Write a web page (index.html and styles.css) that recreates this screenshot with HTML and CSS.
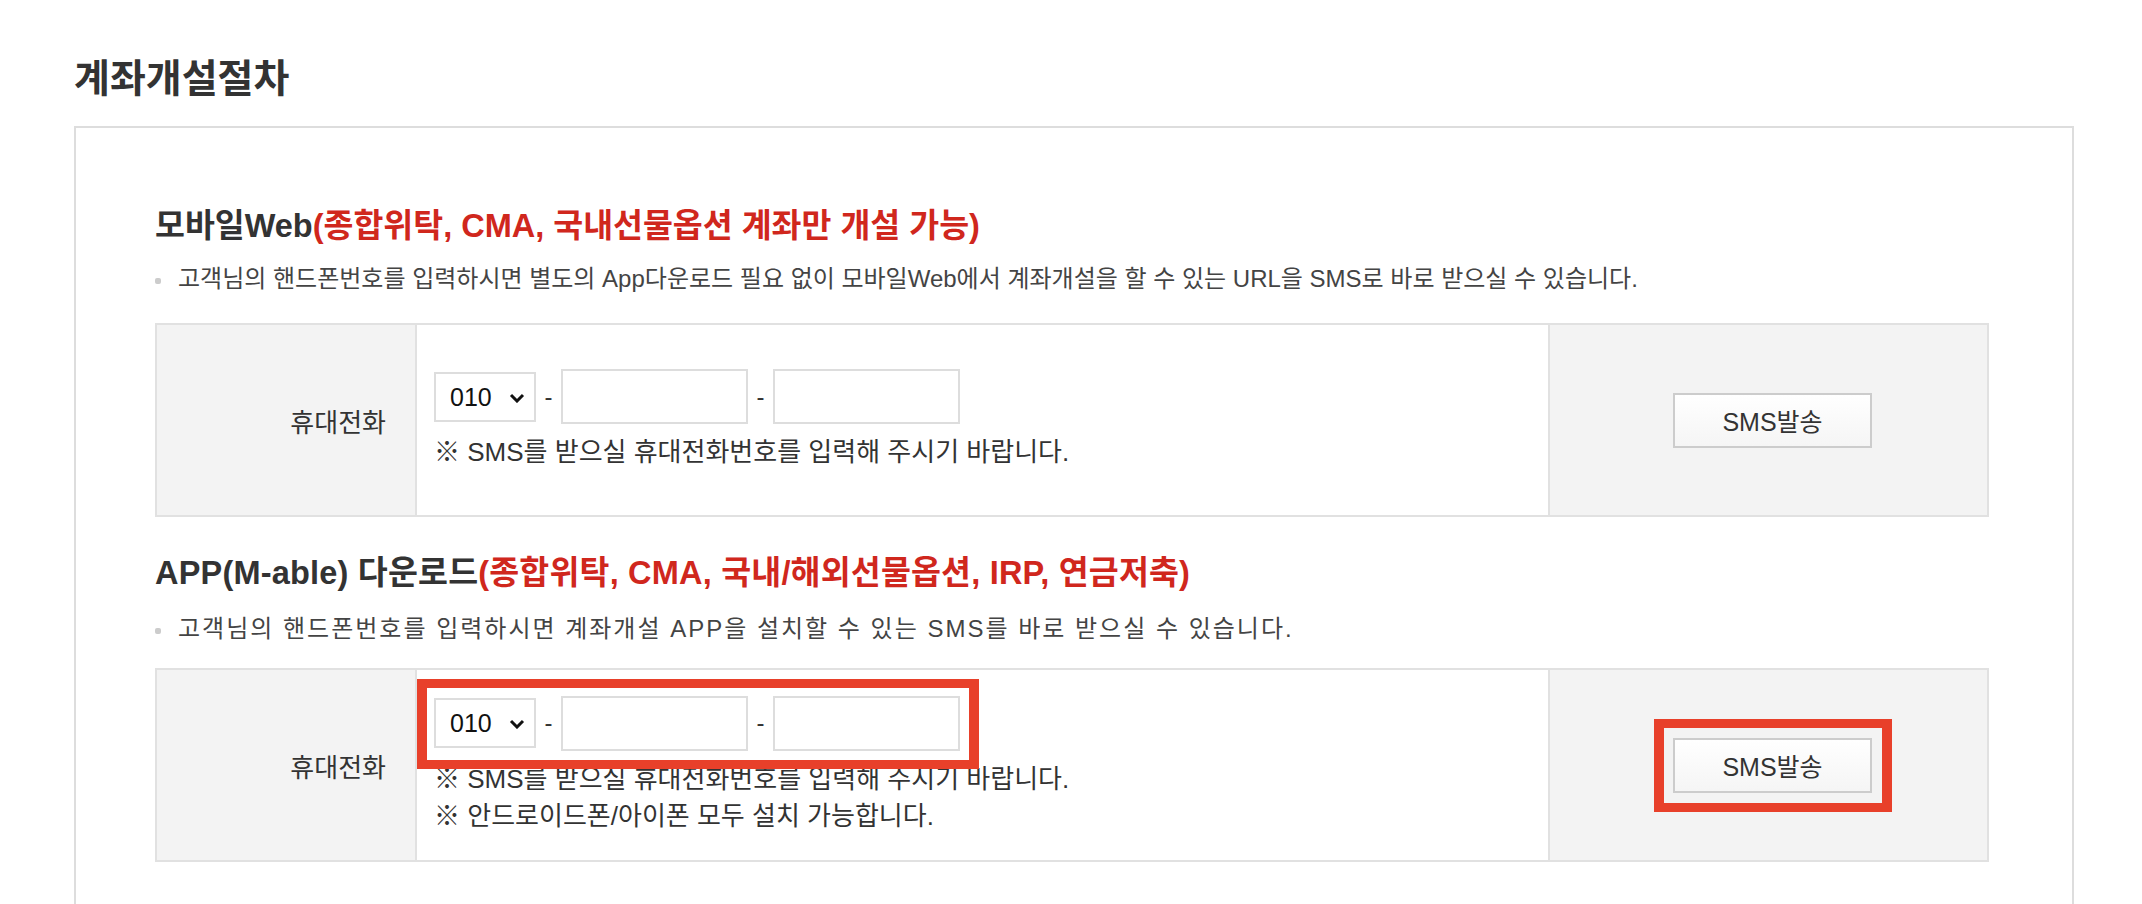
FILE: index.html
```html
<!DOCTYPE html>
<html lang="ko">
<head>
  <meta charset="UTF-8" />
  <meta name="viewport" content="width=device-width, initial-scale=1.0"/>
  <title>계좌개설절차</title>
  <link rel="stylesheet" href="styles.css">
</head>
<body>

  <div class="page">
    <h1 class="page-title">계좌개설절차</h1>

    <div class="box">
      <!-- 모바일Web -->
      <section class="step">
        <h2 class="step-title">모바일Web<em>(종합위탁, CMA, 국내선물옵션 계좌만 개설 가능)</em></h2>
        <p class="step-desc"><span class="dot"></span>고객님의 핸드폰번호를 입력하시면 별도의 App다운로드 필요 없이 모바일Web에서 계좌개설을 할 수 있는 URL을 SMS로 바로 받으실 수 있습니다.</p>
        <table class="phone-table">
          <colgroup><col class="col-label"><col><col class="col-btn"></colgroup>
          <tr>
            <th>휴대전화</th>
            <td class="phone-cell">
              <div class="phone-fields">
                <div class="select-wrap">
                  <select><option>010</option><option>011</option><option>016</option><option>017</option><option>018</option><option>019</option></select>
                  <svg class="chev" width="16" height="10" viewBox="0 0 16 10"><path d="M2 2 L8 8 L14 2" fill="none" stroke="#111" stroke-width="3"/></svg>
                </div>
                <span class="dash">-</span>
                <input type="text" maxlength="4">
                <span class="dash">-</span>
                <input type="text" maxlength="4">
              </div>
              <p class="note">※ SMS를 받으실 휴대전화번호를 입력해 주시기 바랍니다.</p>
            </td>
            <td class="btn-cell"><span class="btn-wrap"><button class="sms-btn">SMS발송</button></span></td>
          </tr>
        </table>
      </section>

      <!-- APP 다운로드 -->
      <section class="step step-app">
        <h2 class="step-title">APP(M-able) 다운로드<em>(종합위탁, CMA, 국내/해외선물옵션, IRP, 연금저축)</em></h2>
        <p class="step-desc"><span class="dot"></span>고객님의 핸드폰번호를 입력하시면 계좌개설 APP을 설치할 수 있는 SMS를 바로 받으실 수 있습니다.</p>
        <table class="phone-table">
          <colgroup><col class="col-label"><col><col class="col-btn"></colgroup>
          <tr>
            <th>휴대전화</th>
            <td class="phone-cell">
              <div class="phone-fields marked">
                <div class="select-wrap">
                  <select><option>010</option><option>011</option><option>016</option><option>017</option><option>018</option><option>019</option></select>
                  <svg class="chev" width="16" height="10" viewBox="0 0 16 10"><path d="M2 2 L8 8 L14 2" fill="none" stroke="#111" stroke-width="3"/></svg>
                </div>
                <span class="dash">-</span>
                <input type="text" maxlength="4">
                <span class="dash">-</span>
                <input type="text" maxlength="4">
              </div>
              <p class="note">※ SMS를 받으실 휴대전화번호를 입력해 주시기 바랍니다.</p>
              <p class="note">※ 안드로이드폰/아이폰 모두 설치 가능합니다.</p>
            </td>
            <td class="btn-cell"><span class="btn-wrap marked"><button class="sms-btn">SMS발송</button></span></td>
          </tr>
        </table>
      </section>
    </div>
  </div>

</body>
</html>
```

FILE: styles.css
```css
* { box-sizing: border-box; margin: 0; padding: 0; }
body {
  font-family: "Liberation Sans", "Noto Sans CJK KR", sans-serif;
  background: #fff;
  color: #333;
  overflow: hidden;
}
.page {
  width: 2000px;
  margin-left: 74px;
  padding-top: 56px;
}
.page-title {
  font-size: 39px;
  line-height: 46px;
  font-weight: bold;
  color: #333;
  margin-bottom: 24px;
}
.box {
  border: 2px solid #ddd;
  padding: 77px 83px 80px 79px;
}
.step-app { margin-top: 35px; }
.step-title {
  font-size: 32.5px;
  line-height: 42px;
  font-weight: bold;
  color: #333;
  margin-bottom: 16px;
}
.step-title em { font-style: normal; color: #d0271d; }
.step-desc {
  display: flex;
  align-items: center;
  font-size: 24px;
  line-height: 32px;
  color: #444;
  margin-bottom: 28px;
}
.step-app .step-title { margin-bottom: 19px; letter-spacing: 0.2px; }
.step-app .step-desc { margin-bottom: 23px; letter-spacing: 2px; }
.dot {
  width: 6px;
  height: 6px;
  border-radius: 2px;
  background: #ccc;
  margin: 4px 17px 0 0;
}
.phone-table {
  width: 100%;
  table-layout: fixed;
  border-collapse: collapse;
  border: 2px solid #e1e1e1;
}
.col-label { width: 260px; }
.col-btn { width: 439px; }
.phone-table th,
.phone-table td {
  height: 192px;
  border: 2px solid #e1e1e1;
  vertical-align: middle;
  font-size: 26px;
  font-weight: normal;
  color: #333;
}
.phone-table th {
  background: #f3f3f3;
  text-align: right;
  padding-right: 29px;
}
.phone-cell { padding-left: 17px; }
.phone-fields {
  display: inline-flex;
  align-items: center;
  position: relative;
  margin-bottom: 10px;
}
.select-wrap { position: relative; }
.select-wrap select {
  appearance: none;
  -webkit-appearance: none;
  width: 102px;
  height: 50px;
  border: 2px solid #ddd;
  background: #fff;
  padding-left: 14px;
  font-family: inherit;
  font-size: 25px;
  color: #111;
  outline: none;
}
.chev {
  position: absolute;
  right: 11px;
  top: 21px;
  pointer-events: none;
}
.dash {
  width: 25px;
  text-align: center;
  font-size: 24px;
  color: #333;
}
.phone-fields input {
  width: 187px;
  height: 55px;
  border: 2px solid #ddd;
  font-size: 24px;
  padding: 0 10px;
  outline: none;
}
.note {
  font-size: 26px;
  line-height: 37px;
  color: #333;
}
.btn-cell {
  background: #f3f3f3;
  text-align: center;
  padding-left: 8px;
}
.btn-wrap {
  display: inline-block;
  position: relative;
  vertical-align: middle;
}
.sms-btn {
  display: block;
  width: 199px;
  height: 55px;
  border: 2px solid #ccc;
  background: linear-gradient(#fff, #f5f5f5);
  font-family: inherit;
  font-size: 25px;
  color: #333;
  cursor: pointer;
}

/* red guide marks */
.marked::after {
  content: "";
  position: absolute;
  border: 9px solid #e8402a;
  border-width: 9px 10px;
  pointer-events: none;
}
.phone-fields.marked::after { top: -17px; bottom: -18px; left: -17px; right: -19px; }
.btn-wrap.marked::after { top: -19px; bottom: -19px; left: -19px; right: -20px; }
```
